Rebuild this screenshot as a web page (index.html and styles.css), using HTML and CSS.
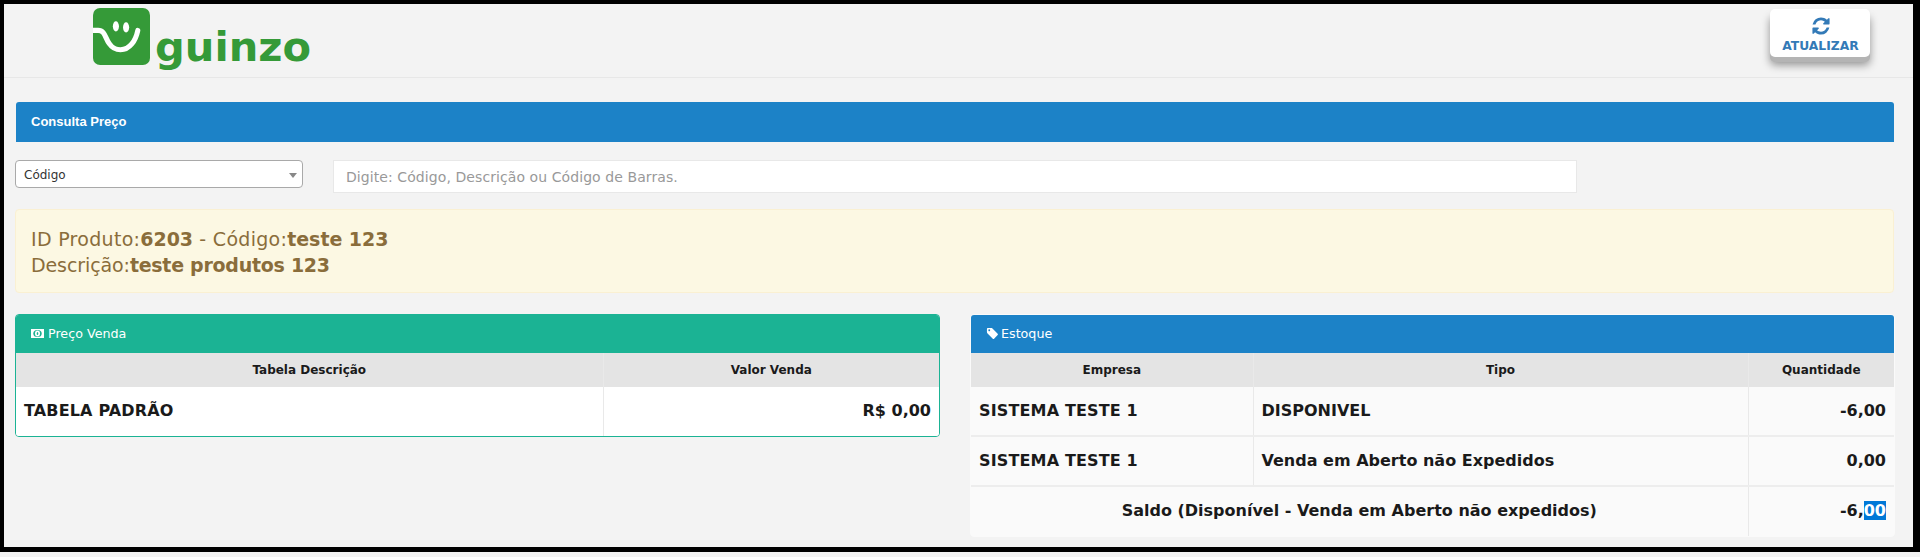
FILE: index.html
```html
<!DOCTYPE html>
<html lang="pt-BR">
<head>
<meta charset="utf-8">
<title>Consulta Preço</title>
<link rel="stylesheet" href="styles.css">
</head>
<body>
<div class="frame">
  <header class="topbar">
    <div class="logo">
      <svg class="logo-mark" viewBox="0 0 56 56" aria-hidden="true">
        <rect width="56" height="56" rx="7" fill="#359a38"/>
        <path d="M0 22H5C12 22 12 30 16 35C20 41 24 41 27 41C36 41 42 32 44 22" fill="none" stroke="#fff" stroke-width="5" stroke-linecap="round"/>
        <ellipse cx="22.5" cy="18" rx="3" ry="5" fill="#fff"/>
        <ellipse cx="32.5" cy="19" rx="3" ry="5" fill="#fff"/>
      </svg>
      <span class="logo-text">guinzo</span>
    </div>
    <button class="refresh" type="button">
      <svg class="refresh-icon" viewBox="0 0 1792 1792" aria-hidden="true"><path fill="currentColor" d="M1639 1056q0 5-1 7-64 268-268 434.5t-478 166.5q-146 0-282.5-55t-243.5-157l-129 129q-19 19-45 19t-45-19-19-45v-448q0-26 19-45t45-19h448q26 0 45 19t19 45-19 45l-137 137q71 66 161 102t187 36q134 0 250-65t186-179q11-17 53-117 8-23 30-23h192q13 0 22.5 9.5t9.5 22.5zm25-800v448q0 26-19 45t-45 19h-448q-26 0-45-19t-19-45 19-45l138-138q-148-137-349-137-134 0-250 65t-186 179q-11 17-53 117-8 23-30 23h-199q-13 0-22.5-9.5t-9.5-22.5v-7q65-268 270-434.5t480-166.5q146 0 284 55.5t245 156.5l130-129q19-19 45-19t45 19 19 45z"/></svg>
      <span>ATUALIZAR</span>
    </button>
  </header>

  <main class="content">
    <div class="page-title">Consulta Preço</div>

    <div class="search-row">
      <div class="select-box">
        <span>Código</span>
        <i class="caret"></i>
      </div>
      <div class="search-input">Digite: Código, Descrição ou Código de Barras.</div>
    </div>

    <div class="notice">
      <div class="notice-first">ID Produto:<b>6203</b> - Código:<b>teste 123</b></div>
      <div class="notice-second">Descrição:<b>teste produtos 123</b></div>
    </div>

    <div class="panels">
      <section class="panel panel-green">
        <h2 class="panel-head">
          <svg class="head-icon" viewBox="0 0 13 9" aria-hidden="true">
            <rect width="13" height="9" fill="#fff"/>
            <ellipse cx="6.5" cy="4.5" rx="4.2" ry="3.6" fill="#1bb394"/>
            <ellipse cx="6.5" cy="4.5" rx="2.5" ry="3" fill="#fff"/>
            <ellipse cx="6.5" cy="4.5" rx=".8" ry="1.6" fill="#1bb394"/>
          </svg>
          Preço Venda
        </h2>
        <table class="grid grid-price">
          <colgroup><col class="c-desc"><col></colgroup>
          <thead>
            <tr><th>Tabela Descrição</th><th>Valor Venda</th></tr>
          </thead>
          <tbody>
            <tr><td class="caps">TABELA PADRÃO</td><td class="num">R$ 0,00</td></tr>
          </tbody>
        </table>
      </section>

      <section class="panel panel-blue">
        <h2 class="panel-head">
          <svg class="head-icon tag" viewBox="0 0 1792 1792" aria-hidden="true"><path fill="#fff" d="M576 448q0-53-37.500-90.500t-90.500-37.500-90.500 37.500-37.500 90.500 37.500 90.500 90.500 37.500 90.500-37.500 37.500-90.500zm1067 576q0 53-37 90l-491 492q-39 37-91 37-53 0-90-37l-715-716q-38-37-64.500-101t-26.500-117v-416q0-52 38-90t90-38h416q53 0 117 26.500t102 64.500l715 714q37 39 37 91z"/></svg>
          Estoque
        </h2>
        <table class="grid grid-stock">
          <colgroup><col class="c-emp"><col class="c-tipo"><col></colgroup>
          <thead>
            <tr><th>Empresa</th><th>Tipo</th><th>Quantidade</th></tr>
          </thead>
          <tbody>
            <tr><td class="caps">SISTEMA TESTE 1</td><td>DISPONIVEL</td><td class="num">-6,00</td></tr>
            <tr><td class="caps">SISTEMA TESTE 1</td><td>Venda em Aberto não Expedidos</td><td class="num">0,00</td></tr>
            <tr><td colspan="2" class="center">Saldo (Disponível - Venda em Aberto não expedidos)</td><td class="num">-6,<span class="sel">00</span></td></tr>
          </tbody>
        </table>
      </section>
    </div>
  </main>
</div>
</body>
</html>
```

FILE: styles.css
```css
* { box-sizing: border-box; }

html, body { margin: 0; padding: 0; }

body {
  background: #f3f3f3;
  font-family: "DejaVu Sans", Verdana, sans-serif;
  color: #1a1a1a;
  height: 557px;
  overflow: hidden;
}

.frame {
  height: 552px;
  border-style: solid;
  border-color: #000;
  border-width: 4px 7px 5px 4px;
  background: #f3f3f3;
}

/* top bar */
.topbar {
  height: 74px;
  border-bottom: 1px solid #e7e7e7;
  display: flex;
  justify-content: space-between;
  align-items: flex-start;
  padding: 4px 43px 0 89px;
}

.logo { display: flex; align-items: flex-start; }

.logo-mark { width: 57px; height: 57px; display: block; }

.logo-text {
  font-family: "DejaVu Sans", sans-serif;
  font-weight: 700;
  font-size: 41.6px;
  line-height: 48px;
  color: #359a38;
  margin: 15px 0 0 5px;
}

.refresh {
  width: 100px;
  height: 48px;
  margin-top: 1px;
  padding: 7px 0 0 1px;
  border: 0;
  border-radius: 5px;
  background: #fff;
  color: #337ab7;
  font-family: "DejaVu Sans", sans-serif;
  font-weight: 700;
  font-size: 12.3px;
  line-height: 14px;
  box-shadow: 0 5px 0 #b4b4b4, 0 8px 8px rgba(0, 0, 0, .4);
  display: flex;
  flex-direction: column;
  align-items: center;
  gap: 3px;
}

.refresh-icon { width: 20px; height: 20px; display: block; }

/* main */
.content { padding: 24px 20px 0 11px; }

.page-title {
  height: 40px;
  margin-left: 1px;
  width: 1878px;
  background: #1c82c7;
  border-radius: 3px 3px 0 0;
  color: #fff;
  font-family: "Liberation Sans", Arial, sans-serif;
  font-weight: 700;
  font-size: 13px;
  line-height: 39px;
  padding-left: 15px;
}

.search-row {
  display: flex;
  align-items: flex-start;
  gap: 30px;
  margin-top: 18px;
}

.select-box {
  width: 288px;
  height: 28px;
  background: #fff;
  border: 1px solid #a9a9a9;
  border-radius: 4px;
  font-size: 12px;
  line-height: 25px;
  padding: 2px 5px 0 8px;
  display: flex;
  justify-content: space-between;
  align-items: center;
  color: #333;
}

.caret {
  width: 0;
  height: 0;
  border-left: 4px solid transparent;
  border-right: 4px solid transparent;
  border-top: 5px solid #888;
}

.search-input {
  width: 1244px;
  height: 33px;
  background: #fff;
  border: 1px solid #e8e8e8;
  font-size: 14px;
  letter-spacing: .08px;
  line-height: 32px;
  padding-left: 12px;
  color: #999;
}

.notice {
  margin-top: 16px;
  height: 84px;
  background: #fcf8e3;
  border: 1px solid #faf0d2;
  border-radius: 4px;
  padding: 16px 15px 0;
  color: #8a6d3b;
  font-size: 19px;
  line-height: 26px;
  width: 1879px;
}

.notice-first { letter-spacing: .3px; }
.notice-first b { letter-spacing: -.05px; }
.notice-second { letter-spacing: -.1px; }
.notice-second b { letter-spacing: -.27px; }

.panels {
  display: flex;
  justify-content: space-between;
  margin-top: 21px;
  align-items: flex-start;
  width: 1880px;
}

.panel {
  width: 925px;
  border-radius: 4px;
  overflow: hidden;
}

.panel-green {
  border: 1px solid #1bb394;
}

.panel-blue {
  background: #fafafa;
  border: 1px solid #fafafa;
}

.panel-head {
  margin: 0;
  height: 38px;
  display: flex;
  align-items: center;
  gap: 4px;
  padding: 0 0 1px 15px;
  font-size: 12.7px;
  font-weight: 400;
  color: #fff;
}

.panel-green .panel-head { background: #1bb394; }
.panel-blue .panel-head { background: #1c82c7; }

.head-icon { width: 13px; height: 9px; }
.head-icon.tag { width: 13px; height: 13px; margin-right: -2px; }

.grid {
  width: 100%;
  border-collapse: collapse;
  table-layout: fixed;
}

.c-desc { width: 587px; }
.c-emp { width: 282px; }
.c-tipo { width: 495px; }

.grid th {
  height: 34px;
  background: #e4e4e4;
  border-left: 1px solid #e9e9e9;
  font-size: 12px;
  font-weight: 700;
  padding: 0;
  text-align: center;
}

.grid th:first-child, .grid td:first-child { border-left: 0; }

.grid td {
  height: 50px;
  border-left: 1px solid #e9e9e9;
  border-top: 2px solid #ededed;
  font-size: 16px;
  font-weight: 700;
  padding: 0 8px 2px;
}

.grid tbody tr:first-child td { border-top: 0; height: 49px; }

.grid-price td { background: #fff; }

.caps { letter-spacing: .15px; }
.num { text-align: right; }
.center { text-align: center; }

.sel { background: #0078d7; color: #fff; }
```
